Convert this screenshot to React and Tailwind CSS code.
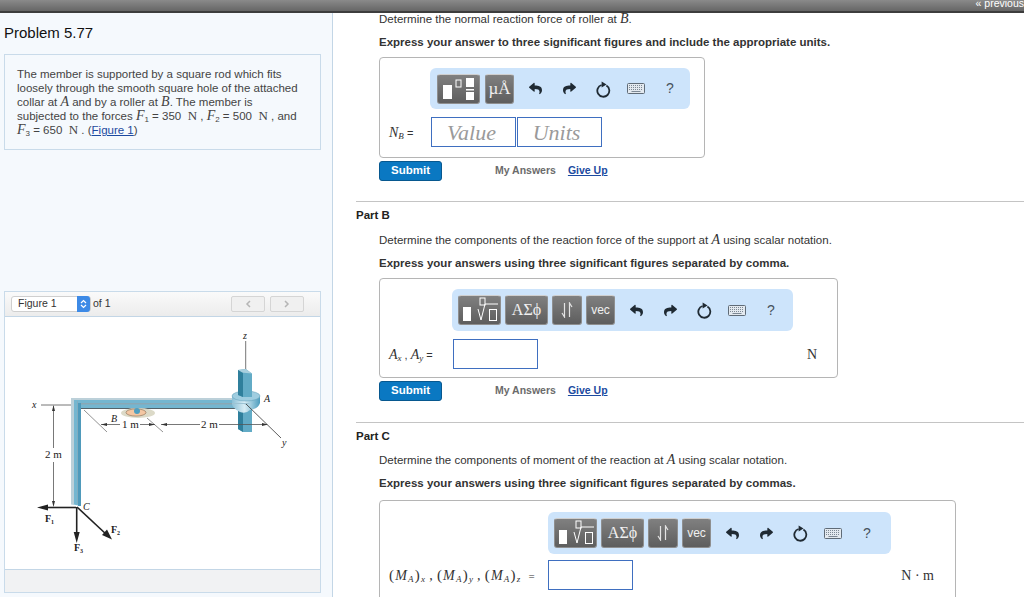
import { FaReply, FaShare } from "react-icons/fa";

const serif = "font-['Liberation_Serif',serif]";

const Btn = ({ w, children }) => (
  <div
    className={`${w} h-[30px] shrink-0 flex items-center justify-center rounded-[3px] border border-[#8f8f8f] border-t-white/70 bg-linear-to-b from-[#808080] to-[#5e5e5e] text-white/90`}
  >
    {children}
  </div>
);

const FracIcon = () => (
  <svg width="36" height="24" viewBox="0 0 36 24">
    <rect x="2" y="8" width="9" height="14" fill="#fff" />
    <rect x="15" y="3" width="5" height="7" fill="none" stroke="#fff" strokeWidth="1" />
    <rect x="25" y="1" width="8" height="9" fill="#fff" />
    <rect x="25" y="12" width="8" height="1.5" fill="#fff" />
    <rect x="25" y="15" width="8" height="8" fill="#fff" />
  </svg>
);

const RootIcon = () => (
  <svg width="38" height="26" viewBox="0 0 38 26">
    <rect x="2" y="10" width="8" height="14" fill="#fff" />
    <rect x="19" y="1" width="5" height="7" fill="none" stroke="#fff" strokeWidth="1" />
    <path d="M17 12 L20 23 L24 7 L37 7" fill="none" stroke="#fff" strokeWidth="1" />
    <rect x="28.5" y="12.5" width="7" height="11" fill="none" stroke="#fff" strokeWidth="1" />
  </svg>
);

const Arrows = () => (
  <svg width="14" height="16" viewBox="0 0 14 16">
    <path d="M4.5 1 V15 L2 11 M9.5 15 V1 L12 5" fill="none" stroke="#e4e4e4" strokeWidth="1.2" />
  </svg>
);

const Reset = () => (
  <svg width="16" height="18" viewBox="0 0 16 18">
    <path d="M11.4 5.6 A6 6 0 1 1 6.6 5" fill="none" stroke="#1f2a33" strokeWidth="1.8" />
    <path d="M6.6 1.5 L11.5 4.6 L6.6 7.5 Z" fill="#1f2a33" />
  </svg>
);

const Keyboard = () => (
  <svg width="18" height="11" viewBox="0 0 18 11">
    <rect x="0.5" y="0.5" width="17" height="10" rx="1" fill="#e3e9ef" stroke="#5f6b77" />
    <path d="M2 2.5 H16 M2 4.5 H16 M2 6.5 H16" stroke="#7c8894" strokeWidth="1" strokeDasharray="1 1" />
    <path d="M4.5 8.5 H13.5" stroke="#7c8894" strokeWidth="1" />
  </svg>
);

const ToolIcons = () => (
  <div className="flex items-center text-[#1f2a33]">
    <div className="w-[34px] flex justify-center"><FaReply size={13} /></div>
    <div className="w-[34px] flex justify-center"><FaShare size={13} /></div>
    <div className="w-[33px] flex justify-center"><Reset /></div>
    <div className="w-[34px] flex justify-center"><Keyboard /></div>
    <div className="w-[34px] flex justify-center text-[14px] text-[#47525c]">?</div>
  </div>
);

const MathToolbar = ({ ml, w }) => (
  <div className={`${ml} ${w} h-[42px] rounded-md bg-[#cde4fb] flex items-center pl-[6px]`}>
    <div className="flex gap-[4px]">
      <Btn w="w-[43px]"><RootIcon /></Btn>
      <Btn w="w-[43px]"><span className={`${serif} text-[16px]`}>ΑΣϕ</span></Btn>
      <Btn w="w-[30px]"><Arrows /></Btn>
      <Btn w="w-[29px]"><span className="text-[12px]">vec</span></Btn>
    </div>
    <div className="ml-[4px]"><ToolIcons /></div>
  </div>
);

const SubmitRow = () => (
  <div className="flex items-center h-[20px] mt-[3px]">
    <div className="w-[63px] h-[20px] rounded-[3px] bg-[#0a78c2] border border-[#07588f] text-white font-bold text-[11.5px] flex items-center justify-center">
      Submit
    </div>
    <span className="ml-[53px] text-[#6b6b6b] font-bold text-[10.5px]">My Answers</span>
    <span className="ml-[12px] text-[#1c4aa0] font-bold text-[10.5px] underline">Give Up</span>
  </div>
);

const PartHead = ({ label, line, bold, h, lineMt }) => (
  <div className={`ml-[23px] border-t border-[#c4c4c4] ${h}`}>
    <div className="text-[11.5px] font-bold text-[#222] leading-none pt-[8px]">{label}</div>
    <div className={`ml-[23px] ${lineMt} text-[11.5px] leading-[14px] text-[#333]`}>{line}</div>
    <div className="ml-[23px] mt-[9px] text-[11.5px] font-bold leading-[14px] text-[#333]">{bold}</div>
  </div>
);

const Italic = ({ children }) => <i className={`${serif} text-[14px]`}>{children}</i>;

const Sub = ({ children }) => <sub className={`${serif} italic text-[9px]`}>{children}</sub>;

const Moment = ({ axis }) => (
  <span>
    <span className="not-italic text-[15px]">(</span>M<Sub>A</Sub><span className="not-italic text-[15px]">)</span><Sub>{axis}</Sub>
  </span>
);

const Figure = () => (
  <svg className="block" width="314" height="253" viewBox="5 316 314 253">
    <defs>
      <linearGradient id="collar" x1="0" x2="1" y1="0" y2="0">
        <stop offset="0" stopColor="#8cc0d6" />
        <stop offset="0.45" stopColor="#d8edf5" />
        <stop offset="1" stopColor="#4c9cbd" />
      </linearGradient>
    </defs>
    <g fontFamily="'Liberation Serif',serif" fill="#222">
      <path d="M245.7 340 V369" stroke="#777" />
      {/* lower rod */}
      <path d="M238 408 H252 V431 H243 L238 428 Z" fill="#62abc6" />
      <path d="M238 408 H243 V431 L238 428 Z" fill="#2f7f9c" />
      {/* beam */}
      <path d="M71 397 H238 V407 H81 V505 L71 503 Z" fill="#74b6d0" />
      <path d="M71 397 H238 V399 H74 V503.5 H71 Z" fill="#bcd0d9" />
      <path d="M78 402 H238 V403.5 H78 Z" fill="#8aa8b5" />
      <path d="M78 402 H81 V505 H78 Z" fill="#4f9abb" />
      <path d="M81 407.5 H236" stroke="#2a3b44" strokeWidth="0.8" />
      <path d="M77.5 503 V400" stroke="#8aa8b5" strokeWidth="0.6" />
      {/* collar */}
      <path d="M232 395 H260 V402 Q258 408 250 409 Q246 413 240 411 Q235 409 232 404 Z" fill="url(#collar)" />
      <ellipse cx="246" cy="395" rx="14" ry="5" fill="#9fcde0" stroke="#5a9ab5" strokeWidth="0.5" />
      <path d="M232 402 H250 Q247 405 244 403 H232 Z" fill="#9dc3d3" />
      {/* upper rod */}
      <path d="M238 369 L245.7 368 L252 372.5 V396 H243 L238 394 Z" fill="#62abc6" />
      <path d="M238 369 L241 371.5 L252 372.5 L245.7 368 Z" fill="#a8cfde" />
      <path d="M238 369 L243 372 V396 L238 394 Z" fill="#2f7f9c" />
      {/* axes and dimensions */}
      <path d="M246 403 L281 437" stroke="#333" strokeWidth="0.8" />
      <path d="M41 404 H71" stroke="#777" />
      <path d="M53.5 405 V447 M53.5 461 V504" stroke="#555" strokeWidth="0.8" />
      <path d="M53.5 404 L52 410 H55 Z M53.5 506 L52 500 H55 Z" fill="#333" />
      <path d="M84 409 L107 431 M147 417 L163 431" stroke="#777" strokeWidth="0.8" />
      <path d="M101 423.5 H120 M140 423.5 H155 M161 423.5 H200 M219 423.5 H267" stroke="#555" strokeWidth="0.8" />
      <path d="M101 423.5 L107 422 V425 Z M155 423.5 L149 422 V425 Z M161 423.5 L167 422 V425 Z M268 423.5 L262 422 V425 Z" fill="#333" />
      <ellipse cx="138" cy="412" rx="17" ry="5" fill="#dcdac8" />
      <ellipse cx="136" cy="411.5" rx="10" ry="3.6" fill="#f4c7a3" stroke="#8a6a4f" strokeWidth="0.6" />
      <circle cx="137" cy="410" r="3" fill="#4f9fc0" />
      {/* forces */}
      <path d="M76 506.5 H44" stroke="#222" strokeWidth="1.6" />
      <path d="M37 506.5 L48 503.5 V509.5 Z" fill="#222" />
      <path d="M76.7 506 V534" stroke="#222" strokeWidth="1.6" />
      <path d="M76.7 542 L73.7 531 H79.7 Z" fill="#222" />
      <path d="M77 506 L107 534" stroke="#222" strokeWidth="1.6" />
      <path d="M112 538.5 L102 534 L107 528.5 Z" fill="#222" />
      <g fontSize="10" fontStyle="italic">
        <text x="243" y="338">z</text>
        <text x="264" y="401">A</text>
        <text x="32" y="407">x</text>
        <text x="111" y="421">B</text>
        <text x="83" y="509">C</text>
        <text x="282" y="445">y</text>
      </g>
      <g fontSize="11">
        <text x="122" y="427">1 m</text>
        <text x="201" y="427">2 m</text>
        <text x="45" y="457">2 m</text>
      </g>
      <g fontSize="10" fontWeight="bold">
        <text x="45" y="521">F</text>
        <text x="51" y="523" fontSize="6">1</text>
        <text x="111" y="532">F</text>
        <text x="117" y="534" fontSize="6">2</text>
        <text x="74" y="550">F</text>
        <text x="80" y="552" fontSize="6">3</text>
      </g>
    </g>
  </svg>
);

const LeftPanel = () => (
  <div className="w-[333px] shrink-0 h-full bg-[#f5f9fd] border-r border-[#c3d6e6] pl-[4px] pr-[12px] overflow-hidden">
    <div className="text-[15px] leading-[16px] text-[#111] mt-[12px]">Problem 5.77</div>
    <div className="mt-[13px] w-[317px] h-[96px] border border-[#c9dbea] pl-[12px] pt-[12px] text-[11.5px] leading-[14px] text-[#444]">
      <div>The member is supported by a square rod which fits</div>
      <div>loosely through the smooth square hole of the attached</div>
      <div>collar at <Italic>A</Italic> and by a roller at <Italic>B</Italic>. The member is</div>
      <div className="whitespace-nowrap">
        subjected to the forces <Italic>F</Italic><sub className="text-[8px]">1</sub> = 350 <span className={`${serif} text-[13px]`}>&nbsp;N</span> , <Italic>F</Italic><sub className="text-[8px]">2</sub> = 500 <span className={`${serif} text-[13px]`}>&nbsp;N</span> , and
      </div>
      <div>
        <Italic>F</Italic><sub className="text-[8px]">3</sub> = 650 <span className={`${serif} text-[13px]`}>&nbsp;N</span> . (<span className="text-[#1c4aa0] underline">Figure 1</span>)
      </div>
    </div>
    <div className="mt-[141px] w-[317px] h-[302px] border border-[#c9dbea] flex flex-col bg-white">
      <div className="h-[25px] shrink-0 bg-linear-to-b from-[#fafafa] to-[#ececec] border-b border-[#c3d6e6] flex items-center pl-[6px] pr-[16px]">
        <div className="w-[80px] h-[16px] rounded-[3px] bg-white border border-[#cfcfcf] flex items-center pl-[6px] relative text-[10.5px] text-[#333]">
          Figure 1
          <div className="absolute right-0 -top-px w-[13px] h-[16px] rounded-r-[3px] bg-[#3d8ae6] flex items-center justify-center">
            <svg width="7" height="10" viewBox="0 0 7 10">
              <path d="M1 4 L3.5 1.5 L6 4 M1 6 L3.5 8.5 L6 6" fill="none" stroke="#fff" strokeWidth="1.2" />
            </svg>
          </div>
        </div>
        <span className="ml-[2px] text-[10.5px] text-[#333]">of 1</span>
        <div className="ml-auto flex gap-[5px]">
          <div className="w-[34px] h-[16px] rounded-[2px] border border-[#d5d5d5] bg-[#f0f0f0] flex items-center justify-center">
            <svg width="6" height="8" viewBox="0 0 6 8"><path d="M5 1 L2 4 L5 7" fill="none" stroke="#b5b5b5" strokeWidth="1.5" /></svg>
          </div>
          <div className="w-[34px] h-[16px] rounded-[2px] border border-[#d5d5d5] bg-[#f0f0f0] flex items-center justify-center">
            <svg width="6" height="8" viewBox="0 0 6 8"><path d="M1 1 L4 4 L1 7" fill="none" stroke="#b5b5b5" strokeWidth="1.5" /></svg>
          </div>
        </div>
      </div>
      <div className="flex-1 min-h-0">
        <Figure />
      </div>
      <div className="h-[23px] shrink-0 bg-[#f1f2f3] border-t border-[#c3d6e6]" />
    </div>
  </div>
);

export default function App() {
  return (
    <div className="h-screen overflow-hidden bg-white flex flex-col font-['Liberation_Sans',Arial,sans-serif]">
      <div className="h-[13px] shrink-0 bg-linear-to-b from-[#8a8a8a] to-[#666] border-b-2 border-[#3d3d3d] flex justify-end items-start overflow-hidden">
        <span className="text-[10.5px] leading-[7px] text-white">« previous</span>
      </div>
      <div className="flex flex-1 min-h-0">
        <LeftPanel />
        <div className="flex-1 min-w-0 overflow-hidden">
          <div className="ml-[46px] -mt-px text-[11.5px] leading-[14px] text-[#333]">
            Determine the normal reaction force of roller at <Italic>B</Italic>.
          </div>
          <div className="ml-[46px] mt-[9px] text-[11.5px] font-bold leading-[14px] text-[#333]">
            Express your answer to three significant figures and include the appropriate units.
          </div>
          <div className="ml-[46px] mt-[8px] w-[326px] h-[101px] border border-[#b5b5b5] rounded pt-[10px]">
            <div className="ml-[50px] w-[260px] h-[41px] rounded-md bg-[#cde4fb] flex items-center pl-[7px]">
              <div className="flex gap-[5px]">
                <Btn w="w-[43px]"><FracIcon /></Btn>
                <Btn w="w-[29px]"><span className={`${serif} text-[17px] leading-none`}>µÅ</span></Btn>
              </div>
              <div className="ml-[4px]"><ToolIcons /></div>
            </div>
            <div className="flex items-center mt-[8px] pl-[9px]">
              <span className="w-[42px] text-[11px] text-[#333]"><Italic>N</Italic><Sub>B</Sub> =</span>
              <div className={`w-[85px] h-[30px] border border-[#3f6fc0] ${serif} italic text-[22px] text-[#9a9a9a] flex items-center justify-center pr-[4px]`}>Value</div>
              <div className={`ml-px w-[85px] h-[30px] border border-[#3f6fc0] ${serif} italic text-[22px] text-[#9a9a9a] flex items-center justify-center pr-[6px]`}>Units</div>
            </div>
          </div>
          <div className="ml-[46px]"><SubmitRow /></div>
          <div className="h-[20px]" />
          <PartHead
            h="h-[77px]"
            lineMt="mt-[11px]"
            label="Part B"
            line={<>Determine the components of the reaction force of the support at <Italic>A</Italic> using scalar notation.</>}
            bold="Express your answers using three significant figures separated by comma."
          />
          <div className="ml-[46px] w-[459px] h-[100px] border border-[#b5b5b5] rounded pt-[10px]">
            <MathToolbar ml="ml-[72px]" w="w-[341px]" />
            <div className="flex items-center mt-[8px] pl-[9px] pr-[20px]">
              <span className="w-[64px] text-[11px] text-[#333] whitespace-nowrap">
                <Italic>A</Italic><Sub>x</Sub> , <Italic>A</Italic><Sub>y</Sub> =
              </span>
              <div className="w-[85px] h-[30px] border border-[#3f6fc0]" />
              <span className={`ml-auto ${serif} text-[14px] text-[#333]`}>N</span>
            </div>
          </div>
          <div className="ml-[46px]"><SubmitRow /></div>
          <div className="h-[21px]" />
          <PartHead
            h="h-[78px]"
            lineMt="mt-[10px]"
            label="Part C"
            line={<>Determine the components of moment of the reaction at <Italic>A</Italic> using scalar notation.</>}
            bold="Express your answers using three significant figures separated by commas."
          />
          <div className="ml-[46px] w-[577px] h-[120px] border border-[#b5b5b5] rounded pt-[11px]">
            <MathToolbar ml="ml-[168px]" w="w-[343px]" />
            <div className="flex items-center mt-[6px] pl-[9px] pr-[21px]">
              <span className={`w-[159px] ${serif} italic text-[14px] tracking-[1.2px] text-[#333] whitespace-nowrap flex items-baseline gap-[3px]`}>
                <Moment axis="x" />,<Moment axis="y" />,<Moment axis="z" />
                <span className="not-italic text-[11px] ml-[4px]">=</span>
              </span>
              <div className="w-[85px] h-[30px] border border-[#3f6fc0]" />
              <span className={`ml-auto ${serif} text-[14px] text-[#333]`}>N · m</span>
            </div>
          </div>
        </div>
      </div>
    </div>
  );
}
